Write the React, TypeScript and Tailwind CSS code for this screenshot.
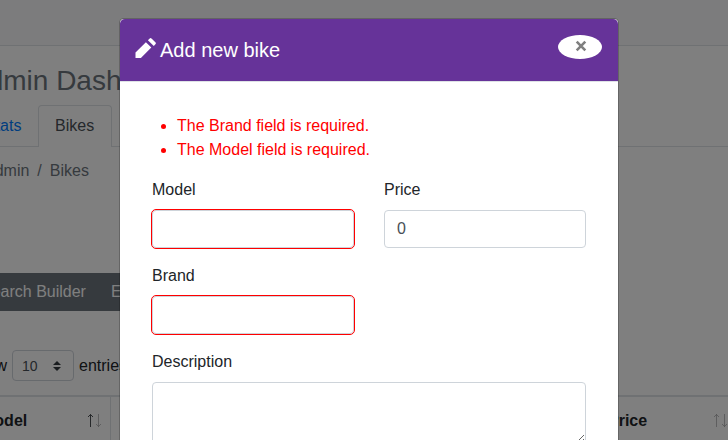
import React from "react";

function SortArrows({ active = false }: { active?: boolean }) {
  return (
    <svg width="14" height="16" viewBox="0 0 14 16" fill="none" stroke="#212529" className="shrink-0">
      <path d="M3.5 15V2.5M1 5L3.5 2.5L6 5" opacity={active ? 0.8 : 0.3} />
      <path d="M11.5 2V14.5M9 12L11.5 14.5L14 12" opacity="0.3" />
    </svg>
  );
}

function Page() {
  return (
    <div className="flex h-[440px] w-[800px] flex-col bg-white text-[16px] leading-[24px] text-[#212529]">
      <div className="h-[46px] shrink-0 border-b border-[#dee2e6] bg-[#f8f9fa]" />
      <div className="-ml-[33px] flex flex-col">
        <h1 className="mt-[18px] h-[34px] pl-[2px] text-[28px] leading-[34px] text-[#6c757d]">Admin Dashboard</h1>
        <div className="mt-[7px] flex h-[42px] border-b border-[#dee2e6]">
          <div className="w-[71px] py-[9px] pl-[18px] text-[#007bff]">Stats</div>
          <div className="h-[42px] w-[74px] shrink-0 rounded-t border border-b-0 border-[#dee2e6] bg-white px-4 py-2 text-[#495057]">Bikes</div>
        </div>
        <div className="mt-3 flex gap-2 pl-[17px] text-[#6c757d]">
          <span>Admin</span><span>/</span><span>Bikes</span>
        </div>
        <div className="mt-[90px] flex h-[38px] w-[300px] gap-[25px] bg-[#6c757d] pt-[7px] pl-[14px] text-white">
          <span>Search Builder</span><span>Excel</span>
        </div>
        <div className="mt-[39px] flex h-[31px] items-center">
          <span className="w-[45px]">Show</span>
          <div className="mr-[5px] flex h-[31px] w-[62px] items-center justify-between rounded border border-[#ced4da] pr-[12px] pl-[9px] text-[14px] text-[#495057]">
            10
            <svg width="8" height="10" viewBox="0 0 4 5" fill="#343a40"><path d="M2 0L0 2h4zM2 5L0 3h4z" /></svg>
          </div>
          entries
        </div>
        <div className="mt-[14px] flex h-[60px] border-t-2 border-[#dee2e6] font-bold">
          <div className="flex w-[144px] items-start justify-between border-r border-[#dee2e6] pt-3 pr-[9px] pl-[14px]">
            Model<div className="pt-[3px]"><SortArrows active /></div>
          </div>
          <div className="w-[482px] border-r border-[#dee2e6]" />
          <div className="flex w-[144px] items-start justify-between pt-3 pr-[10px] pl-[15px]">
            Price<div className="pt-[3px]"><SortArrows /></div>
          </div>
        </div>
      </div>
    </div>
  );
}

function Field({ label, value = "", invalid = false }: { label: string; value?: string; invalid?: boolean }) {
  return (
    <label className="flex w-[202px] flex-col gap-2">
      {label}
      <input
        defaultValue={value}
        className={
          "h-[38px] w-full rounded-[4px] border border-[#ced4da] bg-white px-3 text-[#495057] " +
          (invalid ? "outline outline-1 outline-[#ff0000]" : "outline-none")
        }
      />
    </label>
  );
}

function Modal() {
  return (
    <div className="mx-auto mt-[18px] h-[600px] w-[500px] rounded-[4.8px] border border-black/20 bg-white bg-clip-padding text-[16px] leading-[24px] text-[#212529]">
      <div className="flex h-[63px] items-start justify-between rounded-t-[4.8px] border-b border-[#dee2e6] bg-[#663399] pt-4 pr-4 pl-[15px]">
        <div className="flex items-start text-[20px] leading-[30px] text-white">
          <svg width="22" height="22" viewBox="0 0 22 22" fill="#fff" className="mt-[2px] mr-[3px]">
            <path d="M.5 21V15.6L10.9 5.2L16.3 10.6L5.9 21ZM12.9 3.2L14.7 1.4Q15.6 .7 16.5 1.4L20.6 5.5Q21.3 6.3 20.6 7.1L18.8 8.9Z" />
          </svg>
          Add new bike
        </div>
        <button className="flex h-6 w-11 items-start justify-center rounded-[50%] bg-white pt-[5px] pl-[2px]" aria-label="Close">
          <svg width="12" height="12" viewBox="0 0 12 12" stroke="#7f7f7f" strokeWidth="2.6"><path d="M1.7 1.7L10.3 10.3M10.3 1.7L1.7 10.3" /></svg>
        </button>
      </div>
      <div className="px-8 pt-8">
        <ul className="mb-4 list-disc pl-[25px] text-[#ff0000]">
          <li>The Brand field is required.</li>
          <li>The Model field is required.</li>
        </ul>
        <div className="grid grid-cols-2 gap-x-[30px] gap-y-4">
          <Field label="Model" invalid />
          <Field label="Price" value="0" />
          <Field label="Brand" invalid />
        </div>
        <label className="mt-4 flex flex-col gap-2">
          Description
          <textarea className="h-[62px] w-full resize rounded-[4px] border border-[#ced4da]" />
        </label>
      </div>
    </div>
  );
}

export default function App() {
  return (
    <div className="relative h-[440px] w-[728px] overflow-hidden font-['Liberation_Sans',Arial,sans-serif]">
      <Page />
      <div className="absolute inset-0 bg-black/50 pl-[10px]">
        <Modal />
      </div>
    </div>
  );
}
